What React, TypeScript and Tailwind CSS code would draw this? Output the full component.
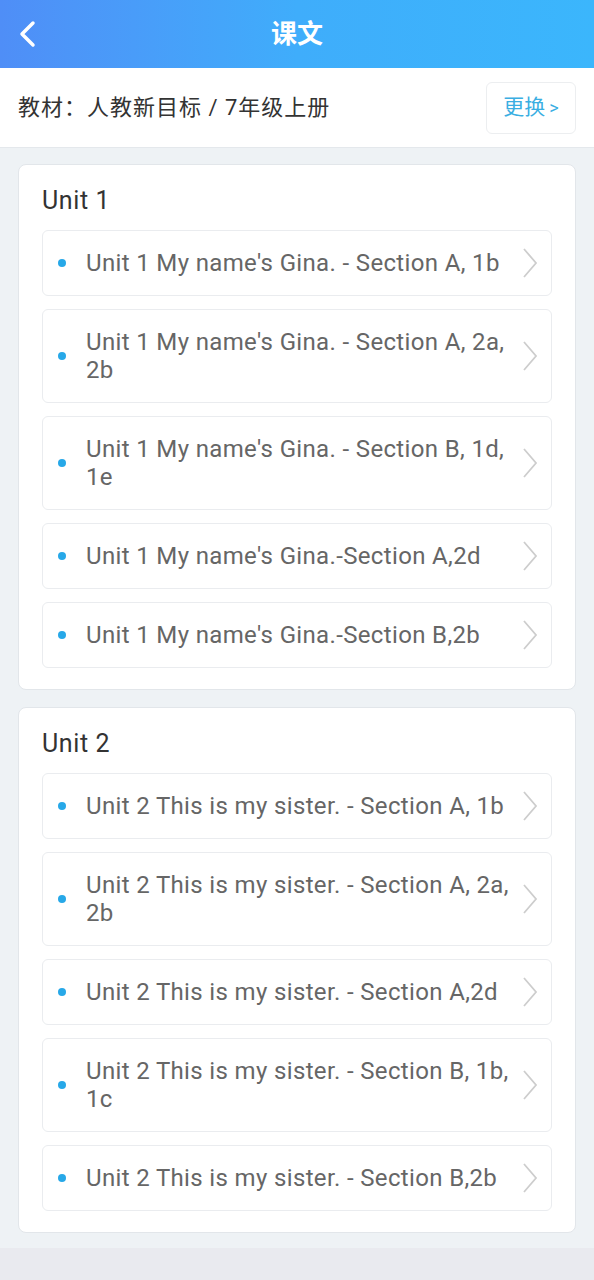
import React from 'react';

const units = [
  {
    title: 'Unit 1',
    items: [
      "Unit 1 My name's Gina. - Section A, 1b",
      "Unit 1 My name's Gina. - Section A, 2a, 2b",
      "Unit 1 My name's Gina. - Section B, 1d, 1e",
      "Unit 1 My name's Gina.-Section A,2d",
      "Unit 1 My name's Gina.-Section B,2b",
    ],
  },
  {
    title: 'Unit 2',
    items: [
      'Unit 2 This is my sister. - Section A, 1b',
      'Unit 2 This is my sister. - Section A, 2a, 2b',
      'Unit 2 This is my sister. - Section A,2d',
      'Unit 2 This is my sister. - Section B, 1b, 1c',
      'Unit 2 This is my sister. - Section B,2b',
    ],
  },
];

const font = { fontFamily: 'Roboto, "Noto Sans CJK SC", sans-serif' };

export default function App() {
  return (
    <div className="w-[594px] min-h-[1280px] bg-[#e9eaef] flex flex-col" style={font}>
      <header className="h-[68px] bg-gradient-to-r from-[#4f8ef7] via-[#3fadfb] to-[#3bb6fc] flex items-center relative">
        <svg className="absolute left-[16px] top-[20px]" width="22" height="28" viewBox="0 0 22 28">
          <path d="M17 3 L6 14 L17 25" fill="none" stroke="white" strokeWidth="3.5" strokeLinecap="round" strokeLinejoin="round" />
        </svg>
        <h1 className="flex-1 text-center text-white text-[26px] font-bold">课文</h1>
      </header>

      <div className="h-[80px] bg-white border-b border-[#e4e8ec] flex items-center justify-between pl-[18px] pr-[18px]">
        <span className="text-[22px] tracking-[1px] text-[#333]">教材：人教新目标 / 7年级上册</span>
        <button className="w-[90px] h-[52px] border border-[#eceef0] rounded-[6px] text-[#3aaee2] text-[21px] flex items-center justify-center gap-1">
          更换 <span className="text-[18px]">&gt;</span>
        </button>
      </div>

      <main className="bg-[#eef2f5] px-[18px] pt-[16px] pb-[15px] flex flex-col gap-[17px]">
        {units.map((u) => (
          <section key={u.title} className="bg-white border border-[#e2e6ea] rounded-[8px] px-[23px] pt-[20px] pb-[21px]">
            <h2 className="text-[25px] tracking-[0.6px] text-[#333] leading-[32px] mb-[13px]">{u.title}</h2>
            <div className="flex flex-col gap-[13px]">
              {u.items.map((t) => (
                <div key={t} className="border border-[#eaecef] rounded-[6px] flex items-center pl-[15px] pr-[13px] py-[18px]">
                  <span className="w-[8px] h-[8px] rounded-full bg-[#27a8e8] shrink-0" />
                  <span className="flex-1 ml-[20px] text-[24px] tracking-[0.35px] leading-[28px] text-[#666]">{t}</span>
                  <svg className="shrink-0 ml-[8px] -my-[2px]" width="16" height="32" viewBox="0 0 16 32">
                    <path d="M2 2 L14 16 L2 30" fill="none" stroke="#cdcdcd" strokeWidth="1.8" />
                  </svg>
                </div>
              ))}
            </div>
          </section>
        ))}
      </main>
      <div className="flex-1 bg-[#e9eaef]" />
    </div>
  );
}
